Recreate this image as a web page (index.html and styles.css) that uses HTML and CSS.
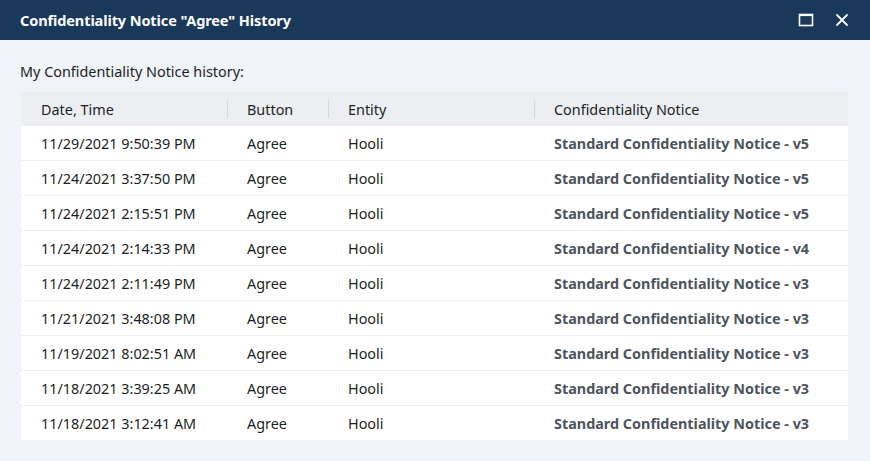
FILE: index.html
```html
<!DOCTYPE html>
<html>
<head>
<meta charset="utf-8">
<link rel="stylesheet" href="styles.css">
</head>
<body>
<div class="dialog">
  <div class="titlebar">
    <div class="title">Confidentiality Notice "Agree" History</div>
    <div class="controls">
      <svg class="ico" width="16" height="16" viewBox="0 0 16 16"><rect x="1.5" y="2.5" width="13" height="11" fill="none" stroke="#fff" stroke-width="1.6"/><line x1="1.5" y1="3.3" x2="14.5" y2="3.3" stroke="#fff" stroke-width="1.6"/></svg>
      <svg class="ico" width="16" height="16" viewBox="0 0 16 16"><path d="M3 3 L13 13 M13 3 L3 13" stroke="#fff" stroke-width="1.8" stroke-linecap="round"/></svg>
    </div>
  </div>
  <div class="content">
    <div class="caption">My Confidentiality Notice history:</div>
    <table class="grid">
      <thead>
        <tr><th class="c1">Date, Time</th><th class="c2">Button</th><th class="c3">Entity</th><th class="c4">Confidentiality Notice</th></tr>
      </thead>
      <tbody>
        <tr><td>11/29/2021 9:50:39 PM</td><td>Agree</td><td>Hooli</td><td class="link">Standard Confidentiality Notice - v5</td></tr>
        <tr><td>11/24/2021 3:37:50 PM</td><td>Agree</td><td>Hooli</td><td class="link">Standard Confidentiality Notice - v5</td></tr>
        <tr><td>11/24/2021 2:15:51 PM</td><td>Agree</td><td>Hooli</td><td class="link">Standard Confidentiality Notice - v5</td></tr>
        <tr><td>11/24/2021 2:14:33 PM</td><td>Agree</td><td>Hooli</td><td class="link">Standard Confidentiality Notice - v4</td></tr>
        <tr><td>11/24/2021 2:11:49 PM</td><td>Agree</td><td>Hooli</td><td class="link">Standard Confidentiality Notice - v3</td></tr>
        <tr><td>11/21/2021 3:48:08 PM</td><td>Agree</td><td>Hooli</td><td class="link">Standard Confidentiality Notice - v3</td></tr>
        <tr><td>11/19/2021 8:02:51 AM</td><td>Agree</td><td>Hooli</td><td class="link">Standard Confidentiality Notice - v3</td></tr>
        <tr><td>11/18/2021 3:39:25 AM</td><td>Agree</td><td>Hooli</td><td class="link">Standard Confidentiality Notice - v3</td></tr>
        <tr><td>11/18/2021 3:12:41 AM</td><td>Agree</td><td>Hooli</td><td class="link">Standard Confidentiality Notice - v3</td></tr>
      </tbody>
    </table>
  </div>
</div>
</body>
</html>
```
FILE: styles.css
```css
html, body {
  margin: 0;
  padding: 0;
  background: #f0f3f8;
  font-family: "Noto Sans", "Open Sans", sans-serif;
  color: #1c1f24;
}
.dialog {
  width: 870px;
  height: 461px;
  display: flex;
  flex-direction: column;
}
.titlebar {
  height: 40px;
  background: #1a385a;
  display: flex;
  align-items: center;
  justify-content: space-between;
  padding: 0 20px 0 20px;
  box-sizing: border-box;
  flex-shrink: 0;
}
.title {
  color: #fff;
  font-weight: 700;
  font-size: 14.5px;
  letter-spacing: -0.1px;
}
.controls {
  display: flex;
  gap: 20px;
  align-items: center;
}
.ico { display: block; }
.content {
  padding: 22px 21px 0 21px;
}
.caption {
  font-size: 14.4px;
  line-height: 20px;
  margin-left: -1px;
  margin-bottom: 10px;
}
.grid {
  width: 827px;
  border-collapse: collapse;
  font-size: 14.4px;
  table-layout: fixed;
}
.grid th {
  background: #eceef2;
  font-weight: 400;
  text-align: left;
  height: 34px;
  padding: 0 0 0 20px;
  position: relative;
}
.grid th + th::before {
  content: "";
  position: absolute;
  left: 0;
  top: 8px;
  height: 18px;
  width: 1px;
  background: #d4d7dc;
}
.c1 { width: 186px; }
.c2 { width: 81px; }
.c3 { width: 186px; }
.grid td {
  background: #fff;
  height: 34px;
  padding: 0 0 0 20px;
  border-bottom: 1px solid #eceef2;
  white-space: nowrap;
}
.grid tbody tr:last-child td { border-bottom: none; }
.grid td.link {
  font-weight: 700;
  color: #4e545c;
}
```
